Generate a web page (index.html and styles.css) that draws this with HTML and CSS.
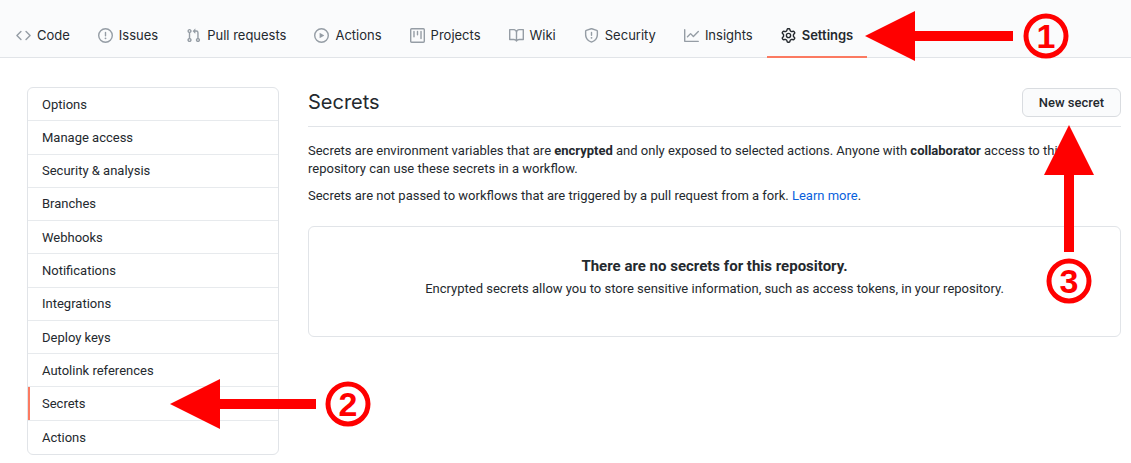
FILE: index.html
```html
<!DOCTYPE html>
<html lang="en">
<head>
<meta charset="utf-8">
<meta name="viewport" content="width=device-width, initial-scale=1">
<title>Secrets</title>
<link rel="stylesheet" href="styles.css">
</head>
<body>
<nav class="repo-nav" aria-label="Repository">
  <a class="tab" href="#code"><svg class="icon" viewBox="0 0 16 16" aria-hidden="true"><path fill-rule="evenodd" d="M4.72 3.22a.75.75 0 011.06 1.06L2.06 8l3.72 3.72a.75.75 0 11-1.06 1.06L.47 8.53a.75.75 0 010-1.06l4.25-4.25zm6.56 0a.75.75 0 10-1.06 1.06L13.94 8l-3.72 3.72a.75.75 0 101.06 1.06l4.25-4.25a.75.75 0 000-1.06l-4.25-4.25z"/></svg>Code</a>
  <a class="tab" href="#issues"><svg class="icon" viewBox="0 0 16 16" aria-hidden="true"><path fill-rule="evenodd" d="M8 1.5a6.5 6.5 0 100 13 6.5 6.5 0 000-13zM0 8a8 8 0 1116 0A8 8 0 010 8zm9 3a1 1 0 11-2 0 1 1 0 012 0zm-.25-6.25a.75.75 0 00-1.5 0v3.5a.75.75 0 001.5 0v-3.5z"/></svg>Issues</a>
  <a class="tab" href="#pulls"><svg class="icon" viewBox="0 0 16 16" aria-hidden="true"><path fill-rule="evenodd" d="M7.177 3.073L9.573.677A.25.25 0 0110 .854v4.792a.25.25 0 01-.427.177L7.177 3.427a.25.25 0 010-.354zM3.75 2.5a.75.75 0 100 1.5.75.75 0 000-1.5zm-2.25.75a2.25 2.25 0 113 2.122v5.256a2.251 2.251 0 11-1.5 0V5.372A2.25 2.25 0 011.5 3.25zM11 2.5h-1V4h1a1 1 0 011 1v5.628a2.251 2.251 0 101.5 0V5A2.5 2.5 0 0011 2.5zm1 10.25a.75.75 0 111.5 0 .75.75 0 01-1.5 0zM3.75 12a.75.75 0 100 1.5.75.75 0 000-1.5z"/></svg>Pull requests</a>
  <a class="tab" href="#actions"><svg class="icon" viewBox="0 0 16 16" aria-hidden="true"><path fill-rule="evenodd" d="M1.5 8a6.5 6.5 0 1113 0 6.5 6.5 0 01-13 0zM8 0a8 8 0 100 16A8 8 0 008 0zM6.379 5.227A.25.25 0 006 5.442v5.117a.25.25 0 00.379.214l4.264-2.559a.25.25 0 000-.428L6.379 5.227z"/></svg>Actions</a>
  <a class="tab" href="#projects"><svg class="icon" viewBox="0 0 16 16" aria-hidden="true"><path fill-rule="evenodd" d="M1.75 0A1.75 1.75 0 000 1.75v12.5C0 15.216.784 16 1.75 16h12.5A1.75 1.75 0 0016 14.25V1.75A1.75 1.75 0 0014.25 0H1.75zM1.5 1.75a.25.25 0 01.25-.25h12.5a.25.25 0 01.25.25v12.5a.25.25 0 01-.25.25H1.75a.25.25 0 01-.25-.25V1.75zM11.75 3a.75.75 0 00-.75.75v7.5a.75.75 0 001.5 0v-7.5a.75.75 0 00-.75-.75zm-8.25.75a.75.75 0 011.5 0v5.5a.75.75 0 01-1.5 0v-5.5zM8 3a.75.75 0 00-.75.75v3.5a.75.75 0 001.5 0v-3.5A.75.75 0 008 3z"/></svg>Projects</a>
  <a class="tab" href="#wiki"><svg class="icon" viewBox="0 0 16 16" aria-hidden="true"><path fill-rule="evenodd" d="M0 1.75A.75.75 0 01.75 1h4.253c1.227 0 2.317.59 3 1.501A3.744 3.744 0 0111.006 1h4.245a.75.75 0 01.75.75v10.5a.75.75 0 01-.75.75h-4.507a2.25 2.25 0 00-1.591.659l-.622.621a.75.75 0 01-1.06 0l-.622-.621A2.25 2.25 0 005.258 13H.75a.75.75 0 01-.75-.75V1.75zm8.755 3a2.25 2.25 0 012.25-2.25H14.5v9h-3.757c-.71 0-1.4.201-1.992.572l.004-7.322zm-1.504 7.324l.004-5.073-.002-2.253A2.25 2.25 0 005.003 2.5H1.5v9h3.757a3.75 3.75 0 011.994.574z"/></svg>Wiki</a>
  <a class="tab" href="#security"><svg class="icon" viewBox="0 0 16 16" aria-hidden="true"><path fill-rule="evenodd" d="M7.467.133a1.75 1.75 0 011.066 0l5.25 1.68A1.75 1.75 0 0115 3.48V7c0 1.566-.32 3.182-1.303 4.682-.983 1.498-2.585 2.813-5.032 3.855a1.7 1.7 0 01-1.33 0c-2.447-1.042-4.049-2.357-5.032-3.855C1.32 10.182 1 8.566 1 7V3.48a1.75 1.75 0 011.217-1.667l5.25-1.68zm.61 1.429a.25.25 0 00-.153 0l-5.25 1.68a.25.25 0 00-.174.238V7c0 1.358.275 2.666 1.057 3.86.784 1.194 2.121 2.34 4.366 3.297a.2.2 0 00.154 0c2.245-.956 3.582-2.104 4.366-3.298C13.225 9.666 13.5 8.36 13.5 7V3.48a.25.25 0 00-.174-.237l-5.25-1.68zM9 10.5a1 1 0 11-2 0 1 1 0 012 0zm-.25-5.75a.75.75 0 10-1.5 0v3a.75.75 0 001.5 0v-3z"/></svg>Security</a>
  <a class="tab" href="#insights"><svg class="icon" viewBox="0 0 16 16" aria-hidden="true"><path fill-rule="evenodd" d="M1.5 1.75a.75.75 0 00-1.5 0v12.5c0 .414.336.75.75.75h14.5a.75.75 0 000-1.5H1.5V1.75zm14.28 2.53a.75.75 0 00-1.06-1.06L10 7.94 7.53 5.47a.75.75 0 00-1.06 0L3.22 8.72a.75.75 0 001.06 1.06L7 7.06l2.47 2.47a.75.75 0 001.06 0l5.25-5.25z"/></svg>Insights</a>
  <a class="tab tab-current" href="#settings" aria-current="page"><svg class="icon" viewBox="0 0 16 16" aria-hidden="true"><path fill-rule="evenodd" d="M7.429 1.525a6.593 6.593 0 011.142 0c.036.003.108.036.137.146l.289 1.105c.147.56.55.967.997 1.189.174.086.341.183.501.29.417.278.97.423 1.53.27l1.102-.303c.11-.03.175.016.195.046.219.31.41.641.573.989.014.031.022.11-.059.19l-.815.806c-.411.406-.562.957-.53 1.456a4.588 4.588 0 010 .582c-.032.499.119 1.05.53 1.456l.815.806c.08.08.073.159.059.19a6.494 6.494 0 01-.573.99c-.02.029-.086.074-.195.045l-1.103-.303c-.559-.153-1.112-.008-1.529.27-.16.107-.327.204-.5.29-.449.222-.851.628-.998 1.189l-.289 1.105c-.029.11-.101.143-.137.146a6.613 6.613 0 01-1.142 0c-.036-.003-.108-.037-.137-.146l-.289-1.105c-.147-.56-.55-.967-.997-1.189a4.502 4.502 0 01-.501-.29c-.417-.278-.97-.423-1.53-.27l-1.102.303c-.11.03-.175-.016-.195-.046a6.492 6.492 0 01-.573-.989c-.014-.031-.022-.11.059-.19l.815-.806c.411-.406.562-.957.53-1.456a4.587 4.587 0 010-.582c.032-.499-.119-1.05-.53-1.456l-.815-.806c-.08-.08-.073-.159-.059-.19a6.44 6.44 0 01.573-.99c.02-.029.086-.075.195-.045l1.103.303c.559.153 1.112.008 1.529-.27.16-.107.327-.204.5-.29.449-.222.851-.628.998-1.189l.289-1.105c.029-.11.101-.143.137-.146zM8 0c-.236 0-.47.01-.701.03-.743.065-1.29.615-1.458 1.261l-.29 1.106c-.017.066-.078.158-.211.224a5.994 5.994 0 00-.668.386c-.123.082-.233.09-.3.071L3.27 2.776c-.644-.177-1.392.02-1.82.63a7.977 7.977 0 00-.704 1.217c-.315.675-.111 1.422.363 1.891l.815.806c.05.048.098.147.088.294a6.084 6.084 0 000 .772c.01.147-.038.246-.088.294l-.815.806c-.474.469-.678 1.216-.363 1.891.2.428.436.835.704 1.218.428.609 1.176.806 1.82.63l1.103-.303c.066-.019.176-.011.299.071.213.143.436.272.668.386.133.066.194.158.212.224l.289 1.106c.169.646.715 1.196 1.458 1.26a8.094 8.094 0 001.402 0c.743-.064 1.29-.614 1.458-1.26l.29-1.106c.017-.066.078-.158.211-.224a5.98 5.98 0 00.668-.386c.123-.082.233-.09.3-.071l1.102.302c.644.177 1.392-.02 1.82-.63.268-.382.505-.789.704-1.217.315-.675.111-1.422-.364-1.891l-.814-.806c-.05-.048-.098-.147-.088-.294a6.1 6.1 0 000-.772c-.01-.147.039-.246.088-.294l.814-.806c.475-.469.679-1.216.364-1.891a7.992 7.992 0 00-.704-1.218c-.428-.609-1.176-.806-1.82-.63l-1.103.303c-.066.019-.176.011-.299-.071a5.991 5.991 0 00-.668-.386c-.133-.066-.194-.158-.212-.224L10.16 1.29C9.99.645 9.444.095 8.701.031A8.094 8.094 0 008 0zm1.5 8a1.5 1.5 0 11-3 0 1.5 1.5 0 013 0zM11 8a3 3 0 11-6 0 3 3 0 016 0z"/></svg>Settings<svg class="callout callout-settings" viewBox="0 0 204 50" role="img" aria-label="Step 1"><path class="arrow" d="M0 25 50 0V20H148V30H50V50z"/><circle class="ring" cx="181" cy="25" r="20"/><text class="digit" x="181" y="37">1</text></svg></a>
</nav>

<div class="layout">
  <nav class="menu" aria-label="Settings">
    <a class="menu-item" href="#options">Options</a>
    <a class="menu-item" href="#access">Manage access</a>
    <a class="menu-item" href="#analysis">Security &amp; analysis</a>
    <a class="menu-item" href="#branches">Branches</a>
    <a class="menu-item" href="#webhooks">Webhooks</a>
    <a class="menu-item" href="#notifications">Notifications</a>
    <a class="menu-item" href="#integrations">Integrations</a>
    <a class="menu-item" href="#keys">Deploy keys</a>
    <a class="menu-item" href="#autolinks">Autolink references</a>
    <a class="menu-item menu-item-current" href="#secrets" aria-current="page">Secrets<svg class="callout callout-menu" viewBox="0 0 204 50" role="img" aria-label="Step 2"><path class="arrow" d="M0 25 50 0V20H146V30H50V50z"/><circle class="ring" cx="178" cy="25" r="20"/><text class="digit" x="178" y="37">2</text></svg></a>
    <a class="menu-item" href="#action-settings">Actions</a>
  </nav>

  <main class="content">
    <header class="subhead">
      <h1 class="title">Secrets</h1>
      <div class="action">
        <button class="button" type="button">New secret</button>
        <svg class="callout callout-button" viewBox="0 0 50 182" role="img" aria-label="Step 3"><path class="arrow" d="M25 0 50 50H30V127H20V50H0z"/><circle class="ring" cx="25" cy="156" r="20"/><text class="digit" x="25" y="168">3</text></svg>
      </div>
    </header>
    <p class="text">Secrets are environment variables that are <strong>encrypted</strong> and only exposed to selected actions. Anyone with <strong>collaborator</strong> access to this repository can use these secrets in a workflow.</p>
    <p class="text">Secrets are not passed to workflows that are triggered by a pull request from a fork. <a class="link" href="#learn">Learn more</a>.</p>
    <section class="blank">
      <h2 class="blank-title">There are no secrets for this repository.</h2>
      <p class="blank-text">Encrypted secrets allow you to store sensitive information, such as access tokens, in your repository.</p>
    </section>
  </main>
</div>
</body>
</html>
```
FILE: styles.css
```css
*,
*::before {
  box-sizing: border-box;
}

body {
  display: flex;
  flex-direction: column;
  min-height: 100vh;
  margin: 0;
  background: #fff;
  color: #24292e;
  font: 13px/18px Roboto, "Liberation Sans", sans-serif;
}

.repo-nav {
  display: flex;
  padding: 14px 2px 0;
  border-bottom: 1px solid #e1e4e8;
  background: #fafbfc;
  font-family: Inter, "Liberation Sans", sans-serif;
}

.tab {
  position: relative;
  display: flex;
  align-items: center;
  gap: 6px;
  margin-bottom: -1px;
  padding: 12px 14px;
  border-bottom: 2px solid transparent;
  color: #24292e;
  text-decoration: none;
  white-space: nowrap;
}

.tab-current {
  border-color: #fb7a61;
  font-weight: 600;
}

.icon {
  width: 15px;
  height: 15px;
  fill: #959da5;
}

.tab-current .icon {
  fill: #24292e;
}

.layout {
  display: grid;
  flex: 1;
  grid-template-columns: 252px minmax(0, 1fr);
  gap: 29px;
  padding: 29px 10px 8px 27px;
}

.menu {
  display: grid;
  grid-auto-rows: minmax(32px, 1fr);
  border: 1px solid #e1e4e8;
  border-radius: 6px;
}

.menu-item {
  position: relative;
  display: flex;
  align-items: center;
  padding: 1px 14px 0;
  border-bottom: 1px solid #e7eaed;
  color: #24292e;
  text-decoration: none;
}

.menu-item:last-child {
  border-bottom: 0;
}

.menu-item-current::before {
  position: absolute;
  inset: 0 auto 0 0;
  width: 2px;
  background: #fb7a61;
  content: "";
}

.subhead {
  display: flex;
  align-items: center;
  justify-content: space-between;
  margin-bottom: 15px;
  padding: 1px 0 9px;
  border-bottom: 1px solid #e1e4e8;
}

.title {
  margin: 0;
  font-family: Inter, "Liberation Sans", sans-serif;
  font-size: 20px;
  font-weight: 400;
  line-height: 29px;
}

.action {
  position: relative;
  display: flex;
}

.button {
  padding: 5px 16px;
  border: 1px solid #d9dce0;
  border-radius: 6px;
  background: #fafbfc;
  color: #24292e;
  font: 500 13px/17px Roboto, "Liberation Sans", sans-serif;
}

.text {
  margin: 0 0 9px;
}

strong {
  font-weight: 700;
}

.link {
  color: #0a5fdd;
  text-decoration: none;
}

.blank {
  margin-top: 21px;
  padding: 29px;
  border: 1px solid #e1e4e8;
  border-radius: 6px;
  text-align: center;
}

.blank-title {
  margin: 0 0 3px;
  font-size: 15px;
  font-weight: 700;
  line-height: 21px;
}

.blank-text {
  margin: 0 0 9px;
}

.callout {
  position: absolute;
  z-index: 1;
  width: 204px;
  height: 50px;
  overflow: visible;
  pointer-events: none;
}

.callout-settings {
  top: -3px;
  left: 98px;
}

.callout-menu {
  top: -8px;
  left: 142px;
}

.callout-button {
  top: 37px;
  right: 27px;
  width: 50px;
  height: 182px;
}

.arrow {
  fill: #f00;
}

.ring {
  fill: none;
  stroke: #f00;
  stroke-width: 5px;
}

.digit {
  fill: #f00;
  font: 700 34px "Liberation Sans", Arial, sans-serif;
  text-anchor: middle;
}
```
